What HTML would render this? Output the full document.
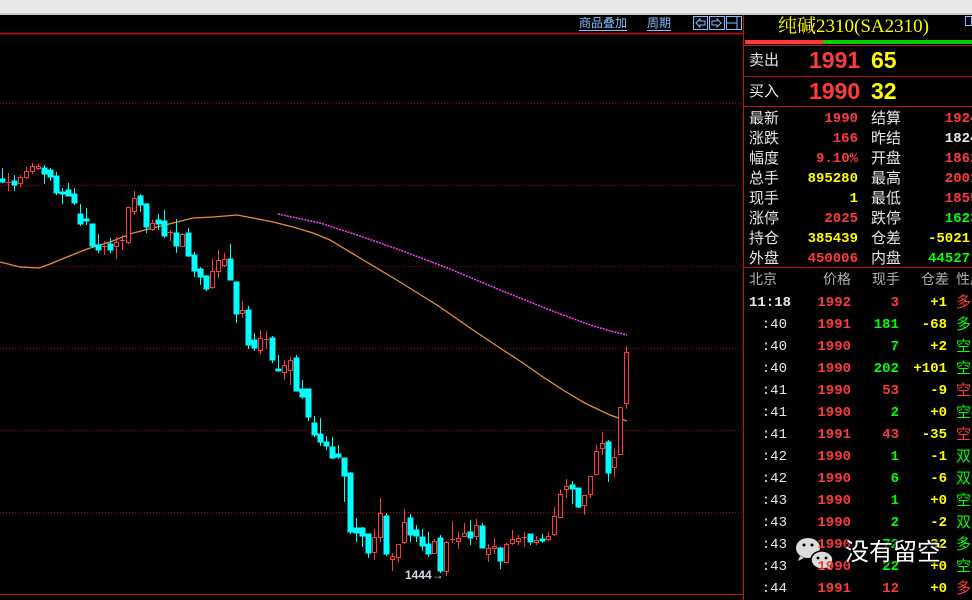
<!DOCTYPE html>
<html><head><meta charset="utf-8"><style>
*{margin:0;padding:0}
html,body{width:972px;height:600px;overflow:hidden}
body{background:#000;position:relative;font-family:"Liberation Sans","Noto Sans CJK SC",sans-serif}
.t{position:absolute;white-space:nowrap;line-height:1}
.w{color:#e8e8e8}.r{color:#ff3a3a}.y{color:#ffff00}.g{color:#00ff00}.gr{color:#c0c0c0}
.n{font-family:"Liberation Mono","DejaVu Sans Mono",monospace;font-weight:bold;font-size:14px}
.lab{font-size:15px;color:#e8e8e8}
</style></head><body>
<div style="position:absolute;left:0;top:0;width:972px;height:13px;background:#e8e8e8"></div>
<div style="position:absolute;left:0;top:13px;width:972px;height:2px;background:#c8c8c8"></div>

<svg style="position:absolute;left:0;top:0" width="972" height="600">
<line x1="0" y1="33.5" x2="743" y2="33.5" stroke="#d01010" stroke-width="1.5"/>
<line x1="743.5" y1="15" x2="743.5" y2="600" stroke="#d01010"/>
<g stroke="#a01010" stroke-dasharray="1,2">
<line x1="0" y1="103.5" x2="743" y2="103.5"/><line x1="0" y1="185.5" x2="743" y2="185.5"/><line x1="0" y1="266.5" x2="743" y2="266.5"/><line x1="0" y1="348.5" x2="743" y2="348.5"/><line x1="0" y1="430.5" x2="743" y2="430.5"/><line x1="0" y1="512.5" x2="743" y2="512.5"/>
</g>
<line x1="0" y1="594.5" x2="743" y2="594.5" stroke="#d01010"/>
<g fill="none" stroke="#80c0ff">
<rect x="693.5" y="16.5" width="14" height="13"/><rect x="709.5" y="16.5" width="15" height="13"/><rect x="726.5" y="16.5" width="15" height="13"/>
<path d="M696 23 l4-4 v2 h5 v4 h-5 v2 z"/><path d="M721 23 l-4-4 v2 h-5 v4 h5 v2 z"/>
<line x1="726" y1="23" x2="737" y2="23"/><line x1="737" y1="17" x2="737" y2="29"/>
<line x1="579" y1="30.5" x2="627" y2="30.5"/><line x1="647" y1="30.5" x2="671" y2="30.5"/>
</g>
<polyline fill="none" stroke="#e89030" stroke-width="1.3" points="0,262 20,267 39,268 50,264 67,257 87,249 110,242 133,233 153,228 177,222 193,218 213,217 237,215 253,218 273,222 293,227 313,233 330,240 360,258 400,282 440,307 473,330 503,350 523,363 543,377 563,390 583,402 593,407 610,415 627,421"/>
<polyline fill="none" stroke="#ff40ff" stroke-width="1.5" stroke-dasharray="2,1" points="278,214 320,223 360,236 400,250 450,269 500,290 550,310 590,325 607,330 627,335"/>
<g stroke-width="1">
<g stroke="#00ffff" fill="#00ffff">
<line x1="2.5" y1="168" x2="2.5" y2="183"/><rect x="0" y="179" width="5" height="3"/>
<line x1="14.5" y1="175" x2="14.5" y2="191"/><rect x="12" y="181" width="5" height="4"/>
<line x1="44.5" y1="165" x2="44.5" y2="184"/><rect x="42" y="168" width="5" height="6"/>
<line x1="50.5" y1="168" x2="50.5" y2="181"/><rect x="48" y="170" width="5" height="7"/>
<line x1="56.5" y1="172" x2="56.5" y2="195"/><rect x="54" y="176" width="5" height="17"/>
<line x1="62.5" y1="188" x2="62.5" y2="204"/><rect x="60" y="192" width="5" height="2"/>
<line x1="68.5" y1="183" x2="68.5" y2="196"/><rect x="66" y="190" width="5" height="6"/>
<line x1="74.5" y1="188" x2="74.5" y2="205"/><rect x="72" y="194" width="5" height="9"/>
<line x1="80.5" y1="204" x2="80.5" y2="226"/><rect x="78" y="214" width="5" height="10"/>
<line x1="86.5" y1="208" x2="86.5" y2="225"/><rect x="84" y="219" width="5" height="2"/>
<line x1="92.5" y1="224" x2="92.5" y2="248"/><rect x="90" y="224" width="5" height="22"/>
<line x1="98.5" y1="234" x2="98.5" y2="253"/><rect x="96" y="245" width="5" height="5"/>
<line x1="110.5" y1="238" x2="110.5" y2="253"/><rect x="108" y="244" width="5" height="6"/>
<line x1="140.5" y1="194" x2="140.5" y2="212"/><rect x="138" y="196" width="5" height="9"/>
<line x1="146.5" y1="203" x2="146.5" y2="233"/><rect x="144" y="204" width="5" height="23"/>
<line x1="158.5" y1="214" x2="158.5" y2="230"/><rect x="156" y="220" width="5" height="4"/>
<line x1="164.5" y1="210" x2="164.5" y2="238"/><rect x="162" y="221" width="5" height="15"/>
<line x1="176.5" y1="219" x2="176.5" y2="253"/><rect x="174" y="233" width="5" height="13"/>
<line x1="188.5" y1="228" x2="188.5" y2="257"/><rect x="186" y="233" width="5" height="23"/>
<line x1="194.5" y1="252" x2="194.5" y2="277"/><rect x="192" y="255" width="5" height="16"/>
<line x1="200.5" y1="267" x2="200.5" y2="285"/><rect x="198" y="269" width="5" height="8"/>
<line x1="206.5" y1="275" x2="206.5" y2="291"/><rect x="204" y="276" width="5" height="13"/>
<line x1="230.5" y1="244" x2="230.5" y2="280"/><rect x="228" y="259" width="5" height="21"/>
<line x1="236.5" y1="282" x2="236.5" y2="323"/><rect x="234" y="282" width="5" height="32"/>
<line x1="248.5" y1="306" x2="248.5" y2="349"/><rect x="246" y="310" width="5" height="35"/>
<line x1="254.5" y1="333" x2="254.5" y2="351"/><rect x="252" y="340" width="5" height="8"/>
<line x1="272.5" y1="336" x2="272.5" y2="363"/><rect x="270" y="338" width="5" height="22"/>
<line x1="278.5" y1="355" x2="278.5" y2="370"/><rect x="276" y="369" width="5" height="2"/>
<line x1="296.5" y1="355" x2="296.5" y2="391"/><rect x="294" y="358" width="5" height="33"/>
<line x1="302.5" y1="380" x2="302.5" y2="399"/><rect x="300" y="389" width="5" height="8"/>
<line x1="308.5" y1="389" x2="308.5" y2="421"/><rect x="306" y="389" width="5" height="28"/>
<line x1="314.5" y1="416" x2="314.5" y2="437"/><rect x="312" y="423" width="5" height="12"/>
<line x1="320.5" y1="418" x2="320.5" y2="446"/><rect x="318" y="434" width="5" height="8"/>
<line x1="326.5" y1="436" x2="326.5" y2="450"/><rect x="324" y="442" width="5" height="4"/>
<line x1="332.5" y1="437" x2="332.5" y2="459"/><rect x="330" y="447" width="5" height="11"/>
<line x1="338.5" y1="445" x2="338.5" y2="459"/><rect x="336" y="454" width="5" height="3"/>
<line x1="344.5" y1="458" x2="344.5" y2="502"/><rect x="342" y="458" width="5" height="18"/>
<line x1="350.5" y1="472" x2="350.5" y2="534"/><rect x="348" y="473" width="5" height="59"/>
<line x1="356.5" y1="518" x2="356.5" y2="542"/><rect x="354" y="528" width="5" height="5"/>
<line x1="362.5" y1="527" x2="362.5" y2="547"/><rect x="360" y="528" width="5" height="8"/>
<line x1="368.5" y1="534" x2="368.5" y2="558"/><rect x="366" y="534" width="5" height="19"/>
<line x1="386.5" y1="513" x2="386.5" y2="556"/><rect x="384" y="516" width="5" height="38"/>
<line x1="410.5" y1="514" x2="410.5" y2="542"/><rect x="408" y="518" width="5" height="17"/>
<line x1="416.5" y1="525" x2="416.5" y2="542"/><rect x="414" y="530" width="5" height="6"/>
<line x1="422.5" y1="529" x2="422.5" y2="551"/><rect x="420" y="537" width="5" height="9"/>
<line x1="428.5" y1="532" x2="428.5" y2="557"/><rect x="426" y="544" width="5" height="10"/>
<line x1="440.5" y1="535" x2="440.5" y2="573"/><rect x="438" y="538" width="5" height="33"/>
<line x1="470.5" y1="520" x2="470.5" y2="545"/><rect x="468" y="532" width="5" height="6"/>
<line x1="482.5" y1="523" x2="482.5" y2="548"/><rect x="480" y="526" width="5" height="22"/>
<line x1="500.5" y1="547" x2="500.5" y2="569"/><rect x="498" y="548" width="5" height="13"/>
<line x1="530.5" y1="534" x2="530.5" y2="545"/><rect x="528" y="534" width="5" height="8"/>
<line x1="542.5" y1="534" x2="542.5" y2="543"/><rect x="540" y="539" width="5" height="2"/>
<line x1="572.5" y1="481" x2="572.5" y2="504"/><rect x="570" y="485" width="5" height="4"/>
<line x1="578.5" y1="488" x2="578.5" y2="508"/><rect x="576" y="488" width="5" height="19"/>
<line x1="608.5" y1="440" x2="608.5" y2="482"/><rect x="606" y="442" width="5" height="31"/>
</g>
<g stroke="#ff3a3a" fill="#000">
<line x1="8.5" y1="173" x2="8.5" y2="191"/><line x1="6" y1="182.5" x2="11" y2="182.5"/>
<line x1="20.5" y1="175" x2="20.5" y2="187"/><rect x="18.5" y="177.5" width="4" height="6"/>
<line x1="26.5" y1="167" x2="26.5" y2="179"/><rect x="24.5" y="171.5" width="4" height="6"/>
<line x1="32.5" y1="163" x2="32.5" y2="174"/><rect x="30.5" y="166.5" width="4" height="5"/>
<line x1="38.5" y1="164" x2="38.5" y2="170"/><rect x="36.5" y="166.5" width="4" height="2"/>
<line x1="104.5" y1="241" x2="104.5" y2="255"/><line x1="102" y1="246.5" x2="107" y2="246.5"/>
<line x1="116.5" y1="237" x2="116.5" y2="259"/><rect x="114.5" y="242.5" width="4" height="4"/>
<line x1="122.5" y1="235" x2="122.5" y2="250"/><line x1="120" y1="240.5" x2="125" y2="240.5"/>
<line x1="128.5" y1="207" x2="128.5" y2="244"/><rect x="126.5" y="207.5" width="4" height="35"/>
<line x1="134.5" y1="191" x2="134.5" y2="215"/><rect x="132.5" y="198.5" width="4" height="13"/>
<line x1="152.5" y1="220" x2="152.5" y2="231"/><rect x="150.5" y="223.5" width="4" height="6"/>
<line x1="170.5" y1="230" x2="170.5" y2="241"/><line x1="168" y1="232.5" x2="173" y2="232.5"/>
<line x1="182.5" y1="233" x2="182.5" y2="247"/><rect x="180.5" y="234.5" width="4" height="12"/>
<line x1="212.5" y1="259" x2="212.5" y2="289"/><rect x="210.5" y="271.5" width="4" height="16"/>
<line x1="218.5" y1="250" x2="218.5" y2="278"/><rect x="216.5" y="260.5" width="4" height="11"/>
<line x1="224.5" y1="253" x2="224.5" y2="267"/><rect x="222.5" y="259.5" width="4" height="6"/>
<line x1="242.5" y1="301" x2="242.5" y2="318"/><rect x="240.5" y="310.5" width="4" height="3"/>
<line x1="260.5" y1="330" x2="260.5" y2="354"/><rect x="258.5" y="338.5" width="4" height="12"/>
<line x1="266.5" y1="331" x2="266.5" y2="349"/><line x1="264" y1="339.5" x2="269" y2="339.5"/>
<line x1="284.5" y1="360" x2="284.5" y2="380"/><rect x="282.5" y="365.5" width="4" height="7"/>
<line x1="290.5" y1="357" x2="290.5" y2="385"/><rect x="288.5" y="360.5" width="4" height="10"/>
<line x1="374.5" y1="529" x2="374.5" y2="560"/><rect x="372.5" y="537.5" width="4" height="15"/>
<line x1="380.5" y1="498" x2="380.5" y2="542"/><rect x="378.5" y="513.5" width="4" height="24"/>
<line x1="392.5" y1="553" x2="392.5" y2="571"/><rect x="390.5" y="556.5" width="4" height="3"/>
<line x1="398.5" y1="544" x2="398.5" y2="562"/><rect x="396.5" y="544.5" width="4" height="13"/>
<line x1="404.5" y1="509" x2="404.5" y2="544"/><rect x="402.5" y="522.5" width="4" height="20"/>
<line x1="434.5" y1="539" x2="434.5" y2="553"/><rect x="432.5" y="541.5" width="4" height="12"/>
<line x1="446.5" y1="541" x2="446.5" y2="576"/><rect x="444.5" y="542.5" width="4" height="29"/>
<line x1="452.5" y1="521" x2="452.5" y2="543"/><line x1="450" y1="539.5" x2="455" y2="539.5"/>
<line x1="458.5" y1="532" x2="458.5" y2="549"/><rect x="456.5" y="538.5" width="4" height="3"/>
<line x1="464.5" y1="523" x2="464.5" y2="537"/><rect x="462.5" y="533.5" width="4" height="3"/>
<line x1="476.5" y1="519" x2="476.5" y2="540"/><rect x="474.5" y="525.5" width="4" height="11"/>
<line x1="488.5" y1="544" x2="488.5" y2="562"/><rect x="486.5" y="548.5" width="4" height="6"/>
<line x1="494.5" y1="538" x2="494.5" y2="554"/><rect x="492.5" y="546.5" width="4" height="2"/>
<line x1="506.5" y1="543" x2="506.5" y2="563"/><rect x="504.5" y="544.5" width="4" height="18"/>
<line x1="512.5" y1="530" x2="512.5" y2="545"/><rect x="510.5" y="539.5" width="4" height="4"/>
<line x1="518.5" y1="535" x2="518.5" y2="545"/><rect x="516.5" y="538.5" width="4" height="3"/>
<line x1="524.5" y1="532" x2="524.5" y2="547"/><line x1="522" y1="537.5" x2="527" y2="537.5"/>
<line x1="536.5" y1="536" x2="536.5" y2="545"/><rect x="534.5" y="540.5" width="4" height="2"/>
<line x1="548.5" y1="532" x2="548.5" y2="541"/><rect x="546.5" y="536.5" width="4" height="3"/>
<line x1="554.5" y1="507" x2="554.5" y2="536"/><rect x="552.5" y="516.5" width="4" height="18"/>
<line x1="560.5" y1="489" x2="560.5" y2="517"/><rect x="558.5" y="494.5" width="4" height="23"/>
<line x1="566.5" y1="479" x2="566.5" y2="498"/><rect x="564.5" y="486.5" width="4" height="3"/>
<line x1="584.5" y1="495" x2="584.5" y2="515"/><rect x="582.5" y="495.5" width="4" height="10"/>
<line x1="590.5" y1="476" x2="590.5" y2="498"/><rect x="588.5" y="476.5" width="4" height="18"/>
<line x1="596.5" y1="445" x2="596.5" y2="474"/><rect x="594.5" y="451.5" width="4" height="23"/>
<line x1="602.5" y1="432" x2="602.5" y2="455"/><rect x="600.5" y="443.5" width="4" height="5"/>
<line x1="614.5" y1="449" x2="614.5" y2="477"/><rect x="612.5" y="457.5" width="4" height="10"/>
<line x1="620.5" y1="407" x2="620.5" y2="454"/><rect x="618.5" y="407.5" width="4" height="47"/>
<line x1="626.5" y1="346" x2="626.5" y2="409"/><rect x="624.5" y="352.5" width="4" height="51"/>
</g>
</g>
<rect x="745" y="40" width="78" height="4" fill="#ff3a3a"/><rect x="823" y="40" width="149" height="4" fill="#00d000"/>
<g stroke="#c01010"><line x1="744" y1="45.5" x2="972" y2="45.5"/><line x1="744" y1="76.5" x2="972" y2="76.5"/><line x1="744" y1="106.5" x2="972" y2="106.5"/><line x1="744" y1="267.5" x2="972" y2="267.5"/></g>
<rect x="965.5" y="16.5" width="6" height="9" fill="none" stroke="#80c0ff"/>
<ellipse cx="808" cy="548" rx="12" ry="10" fill="#dcdcdc"/>
<path d="M800 556 l-2 5 l6-3z" fill="#dcdcdc"/>
<circle cx="804" cy="545" r="1.5" fill="#000"/><circle cx="812" cy="545" r="1.5" fill="#000"/>
<ellipse cx="822" cy="560" rx="11" ry="9" fill="#dcdcdc" stroke="#000" stroke-width="1.5"/>
<path d="M829 566 l3 4 l-6-2z" fill="#dcdcdc"/>
<circle cx="818" cy="558" r="1.4" fill="#000"/><circle cx="826" cy="558" r="1.4" fill="#000"/>
</svg>

<div class="t" style="left:579px;top:17px;font-size:12px;color:#80c0ff">商品叠加</div>
<div class="t" style="left:647px;top:17px;font-size:12px;color:#80c0ff">周期</div>
<div class="t" style="left:405px;top:569px;font-size:12px;font-weight:bold;color:#d0d8e8">1444→</div>

<div class="t y" style="left:778px;top:17px;font-size:19px;font-family:'Liberation Serif','Noto Serif CJK SC',serif">纯碱2310(SA2310)</div>
<div class="t lab" style="left:749px;top:53px">卖出</div>
<div class="t r" style="left:809px;top:49px;font-size:23px;font-weight:bold">1991</div>
<div class="t y" style="left:871px;top:49px;font-size:23px;font-weight:bold">65</div>
<div class="t lab" style="left:749px;top:84px">买入</div>
<div class="t r" style="left:809px;top:80px;font-size:23px;font-weight:bold">1990</div>
<div class="t y" style="left:871px;top:80px;font-size:23px;font-weight:bold">32</div>

<div style="position:absolute;left:749px;top:109px;width:223px;height:158px;overflow:hidden;font-size:14px;line-height:20px;white-space:nowrap">
<div style="position:absolute;left:0;top:0" class="lab">最新<br>涨跌<br>幅度<br>总手<br>现手<br>涨停<br>持仓<br>外盘</div>
<div style="position:absolute;right:114px;top:0;text-align:right;line-height:20px" class="n"><span class="r">1990</span><br><span class="r">166</span><br><span class="r">9.10%</span><br><span class="y">895280</span><br><span class="y">1</span><br><span class="r">2025</span><br><span class="y">385439</span><br><span class="r">450006</span></div>
<div style="position:absolute;left:122px;top:0" class="lab">结算<br>昨结<br>开盘<br>最高<br>最低<br>跌停<br>仓差<br>内盘</div>
<div style="position:absolute;left:179px;top:0;line-height:20px" class="n"><span class="r">&nbsp;&nbsp;1924</span><br><span class="w">&nbsp;&nbsp;1824</span><br><span class="r">&nbsp;&nbsp;1862</span><br><span class="r">&nbsp;&nbsp;2001</span><br><span class="r">&nbsp;&nbsp;1855</span><br><span class="g">&nbsp;&nbsp;1623</span><br><span class="y">-5021</span><br><span class="g">44527</span></div>
</div>

<div style="position:absolute;left:749px;top:270px;width:223px;height:22px;font-size:14px;color:#b0b0b0;overflow:hidden">
<span class="t" style="left:0;top:2px">北京</span><span class="t" style="left:74px;top:2px">价格</span><span class="t" style="left:123px;top:2px">现手</span><span class="t" style="left:172px;top:2px">仓差</span><span class="t" style="left:207px;top:2px">性质</span>
</div>
<div style="position:absolute;left:744px;top:292px;width:228px;height:308px;overflow:hidden;line-height:22px;font-size:14px;white-space:nowrap">
<div style="position:absolute;left:5px;top:0;width:38px;text-align:right" class="n"><span class="w">11:18</span><br><span class="w" style="font-weight:normal">:40<br>:40<br>:40<br>:41<br>:41<br>:41<br>:42<br>:42<br>:43<br>:43<br>:43<br>:43<br>:44</span></div>
<div style="position:absolute;right:121px;top:0;text-align:right" class="n r">1992<br>1991<br>1990<br>1990<br>1990<br>1990<br>1991<br>1990<br>1990<br>1990<br>1990<br>1990<br>1990<br>1991</div>
<div style="position:absolute;right:73px;top:0;text-align:right" class="n"><span class="r">3</span><br><span class="g">181</span><br><span class="g">7</span><br><span class="g">202</span><br><span class="r">53</span><br><span class="g">2</span><br><span class="r">43</span><br><span class="g">1</span><br><span class="g">6</span><br><span class="g">1</span><br><span class="g">2</span><br><span class="g">72</span><br><span class="g">22</span><br><span class="r">12</span></div>
<div style="position:absolute;right:25px;top:0;text-align:right" class="n y">+1<br>-68<br>+2<br>+101<br>-9<br>+0<br>-35<br>-1<br>-6<br>+0<br>-2<br>-32<br>+0<br>+0</div>
<div style="position:absolute;left:212px;top:0;width:40px;font-size:15px"><span class="r">多开</span><br><span class="g">多平</span><br><span class="g">空开</span><br><span class="g">空开</span><br><span class="r">空平</span><br><span class="g">空换</span><br><span class="r">空平</span><br><span class="g">双平</span><br><span class="g">双平</span><br><span class="g">空换</span><br><span class="g">双平</span><br><span class="g">多平</span><br><span class="g">空换</span><br><span class="r">多换</span></div>
</div>

<div class="t" style="left:845px;top:541px;font-size:24px;color:#fff;text-shadow:1px 1px 2px #000,-1px -1px 2px #000">没有留空</div>
</body></html>
